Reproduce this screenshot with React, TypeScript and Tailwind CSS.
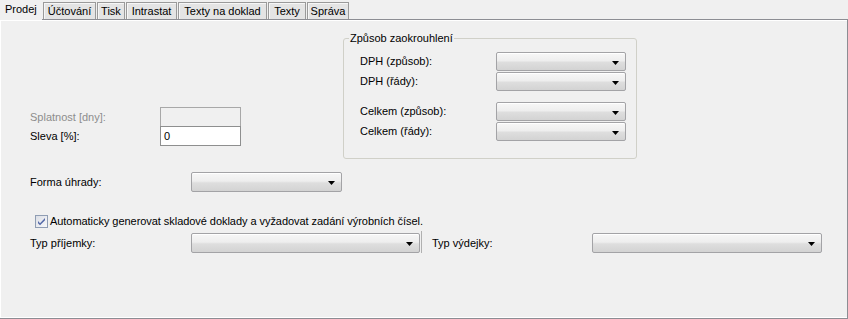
import React from "react";

const Arrow = () => (
  <svg width="7" height="4" viewBox="0 0 7 4" className="block">
    <path d="M0 0h7L3.5 4z" fill="#000" />
  </svg>
);

const Select = ({ className }: { className: string }) => (
  <div
    className={`${className} shrink-0 rounded-[2px] border border-[#a3a3a6] bg-[linear-gradient(#f7f7f7,#eeeeee_45%,#dedede_55%,#d3d3d3)] shadow-[inset_0_1px_0_#ffffff] flex items-center justify-end pr-[6px] pt-[2px]`}
  >
    <Arrow />
  </div>
);

const Tab = ({ label, className }: { label: string; className: string }) => (
  <div
    className={`${className} h-[17px] border border-b-0 border-[#9a9a9a] bg-[#e4e4e4] shadow-[inset_1px_1px_0_#f6f6f6] flex items-center justify-center`}
  >
    {label}
  </div>
);

const App: React.FC = () => {
  return (
    <div className="w-[848px] h-[319px] bg-[#f0f0f0] text-[11px] leading-[13px] text-black font-['Liberation_Sans',Arial,sans-serif] flex flex-col">
      {/* tabs */}
      <div className="h-[20px] flex items-end border-b border-[#8c8d93]">
        <div className="w-[42px] h-[20px] -mb-px bg-[#f0f0f0] flex items-center pl-[5px] pb-[2px]">Prodej</div>
        <div className="flex gap-[1px] ml-[1px]">
          <Tab label="Účtování" className="w-[53px]" />
          <Tab label="Tisk" className="w-[28px]" />
          <Tab label="Intrastat" className="w-[51px]" />
          <Tab label="Texty na doklad" className="w-[89px]" />
          <Tab label="Texty" className="w-[38px]" />
          <Tab label="Správa" className="w-[42px]" />
        </div>
      </div>

      {/* panel */}
      <div className="flex-1 border-r border-b border-[#8c8d93]">
        <div className="h-full border-t border-l border-b border-white">
          {/* top section */}
          <div className="flex items-start">
            <div className="w-[342px] pt-[86px] pl-[29px]">
              <div className="flex items-center">
                <span className="w-[130px] text-[#8d8d8d]">Splatnost [dny]:</span>
                <div className="w-[81px] h-[20px] border border-[#a8a8a8] bg-[#f0f0f0]" />
              </div>
              <div className="flex items-center -mt-px">
                <span className="w-[130px]">Sleva [%]:</span>
                <div className="w-[81px] h-[20px] border border-[#8e8f8f] bg-white flex items-center pl-[3px]">0</div>
              </div>
            </div>

            <div className="relative mt-[17px] w-[294px] h-[121px] rounded-[3px] border border-[#d0d0c8] pt-[13px] pl-[16px]">
              <span className="absolute -top-[7px] left-[5px] bg-[#f0f0f0] px-[1px]">Způsob zaokrouhlení</span>
              <div className="flex items-center">
                <span className="w-[136px]">DPH (způsob):</span>
                <Select className="w-[130px] h-[19px]" />
              </div>
              <div className="flex items-center mt-px">
                <span className="w-[136px]">DPH (řády):</span>
                <Select className="w-[130px] h-[19px]" />
              </div>
              <div className="flex items-center mt-[11px]">
                <span className="w-[136px]">Celkem (způsob):</span>
                <Select className="w-[130px] h-[19px]" />
              </div>
              <div className="flex items-center mt-px">
                <span className="w-[136px]">Celkem (řády):</span>
                <Select className="w-[130px] h-[19px]" />
              </div>
            </div>
          </div>

          {/* forma úhrady */}
          <div className="flex items-center mt-[13px] pl-[29px]">
            <span className="w-[161px]">Forma úhrady:</span>
            <Select className="w-[151px] h-[20px]" />
          </div>

          {/* checkbox */}
          <div className="flex items-center mt-[23px] pl-[34px] h-[13px]">
            <div className="w-[13px] h-[13px] border border-[#8f9db3] bg-[linear-gradient(135deg,#dcdfe6,#f7f7f9)] flex items-center justify-center">
              <svg width="9" height="9" viewBox="0 0 9 9" className="block">
                <path d="M1 4l2 2.2L8 1v2.3L3 8.3 1 6.2z" fill="#5469a8" />
              </svg>
            </div>
            <span className="ml-[2px] tracking-[-0.05px]">Automaticky generovat skladové doklady a vyžadovat zadání výrobních čísel.</span>
          </div>

          {/* typ příjemky / výdejky */}
          <div className="flex items-center mt-[5px] pl-[29px]">
            <span className="w-[161px]">Typ příjemky:</span>
            <Select className="w-[229px] h-[20px]" />
            <div className="ml-[1px] w-px h-[22px] -mt-[3px] bg-[#b0b0b0]" />
            <span className="ml-[10px] w-[160px]">Typ výdejky:</span>
            <Select className="w-[230px] h-[20px]" />
          </div>
        </div>
      </div>
    </div>
  );
};

export default App;
